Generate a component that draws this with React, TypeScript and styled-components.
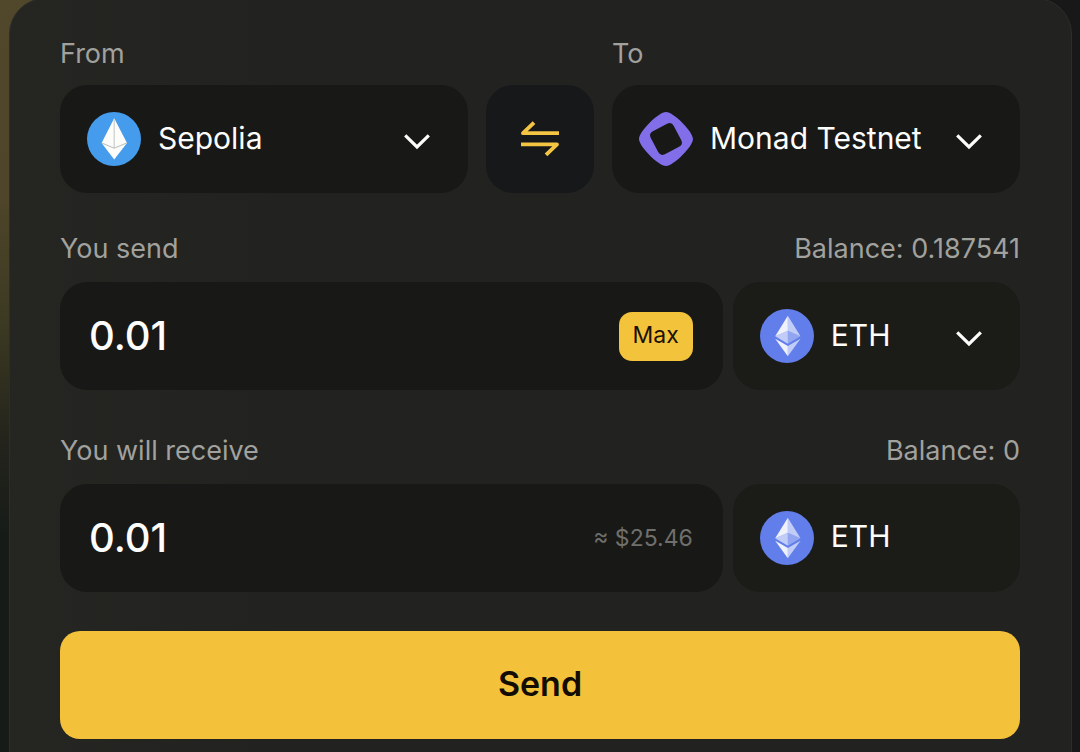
import React, { useState } from "react";
import styled, { createGlobalStyle } from "styled-components";

const GlobalStyle = createGlobalStyle`
  * { box-sizing: border-box; }
  html { background: #151715; }
  body {
    margin: 0;
    color: #fdfdfb;
    font-family: Inter, "Liberation Sans", sans-serif;
  }
  button, input, select { font: inherit; color: inherit; }
`;

const Page = styled.main`
  min-height: 100vh;
  padding: 0 8px 0 9px;
  overflow: hidden;
  display: flex;
  background:
    linear-gradient(90deg, transparent 50%, #171817 50%),
    linear-gradient(180deg, #51472b 0, #4e452a 200px, #3c3a22 320px, #24241c 440px, #161b18 540px, #171b18 100%);
`;

const Card = styled.form`
  flex: 1;
  min-width: 0;
  margin: -2px 0;
  padding: 36px 51px 12px 50px;
  border: 1px solid #2d2d2a;
  border-radius: 36px;
  border-bottom-left-radius: 0;
  border-bottom-right-radius: 0;
  background: linear-gradient(90deg, #252522 0, #222220 260px, #222220 100%);
`;

const Networks = styled.div`
  display: grid;
  grid-template-columns: 1fr 108px 1fr;
  gap: 0 18px;
  align-items: end;
`;

const Field = styled.div`
  min-width: 0;
  display: flex;
  flex-direction: column;
  gap: 12px;
`;

const Section = styled.section<{ $top: number }>`
  margin-top: ${(p) => p.$top}px;
  display: flex;
  flex-direction: column;
  gap: 14px;
`;

const Heading = styled.div`
  display: flex;
  justify-content: space-between;
`;

const Caption = styled.label`
  font-size: 27px;
  line-height: 38px;
  color: #a1a19e;
`;

const Balance = styled.span`
  font-size: 27px;
  line-height: 38px;
  color: #a1a19e;
`;

const Row = styled.div`
  display: grid;
  grid-template-columns: minmax(0, 30fr) minmax(0, 13fr);
  gap: 10px;
`;

const Picker = styled.div<{ $tone?: string }>`
  height: 108px;
  display: grid;
  grid-template-columns: 98px minmax(0, 1fr) 65px;
  align-items: center;
  border-radius: 27px;
  background: ${(p) => p.$tone ?? "#181816"};

  > svg {
    grid-row: 1;
    pointer-events: none;
    z-index: 1;
  }
  > svg:first-of-type {
    grid-column: 1;
    margin-left: 27px;
  }
  > svg:last-of-type:not(:first-of-type) { grid-column: 3; }
`;

const Select = styled.select`
  grid-row: 1;
  grid-column: 1 / -1;
  width: 100%;
  height: 108px;
  padding: 0 65px 3px 98px;
  border: 0;
  border-radius: 27px;
  appearance: none;
  background: transparent;
  font-size: 30px;
  cursor: pointer;

  option { background: #181816; }
`;

const TokenName = styled.span`
  grid-row: 1;
  grid-column: 2;
  padding-bottom: 4px;
  font-size: 30px;
`;

const SwapButton = styled.button`
  height: 108px;
  padding: 0;
  border: 0;
  border-radius: 27px;
  background: #16181a;
  display: grid;
  place-items: center;
  cursor: pointer;
`;

const AmountBox = styled.div`
  height: 108px;
  padding: 0 30px 0 29px;
  border-radius: 27px;
  background: #181816;
  display: flex;
  align-items: center;
  gap: 16px;
`;

const AmountInput = styled.input`
  flex: 1;
  min-width: 0;
  padding: 0 0 2px;
  border: 0;
  outline: 0;
  background: transparent;
  font-size: 40px;
  font-weight: 500;
`;

const MaxButton = styled.button`
  height: 49px;
  padding: 0 14px 2px;
  border: 0;
  border-radius: 13px;
  background: #f4c33c;
  color: #1b1207;
  font-size: 23px;
  cursor: pointer;
`;

const Fiat = styled.span`
  font-size: 23px;
  color: #6f6f6c;
`;

const SendButton = styled.button`
  width: 100%;
  height: 108px;
  margin-top: 39px;
  padding: 0 0 3px;
  border: 0;
  border-radius: 20px;
  background: #f3c13a;
  color: #120c04;
  font-size: 34px;
  font-weight: 600;
  cursor: pointer;
`;

const Chevron = () => (
  <svg width="28" height="28" viewBox="0 0 28 28" fill="none" stroke="#fdfdfb" strokeWidth="3.2" aria-hidden="true">
    <path d="M2.2 10.4 14 22 25.8 10.4" />
  </svg>
);

const SwapIcon = () => (
  <svg width="40" height="40" viewBox="0 0 40 40" fill="none" stroke="#f4c443" strokeWidth="3.8" strokeLinejoin="round" aria-hidden="true">
    <path d="M39 14.2H3L14 3.6" />
    <path d="M1 25.4H37L26 35.8" />
  </svg>
);

const SepoliaIcon = () => (
  <svg width="54" height="54" viewBox="0 0 54 54" aria-hidden="true">
    <circle cx="27" cy="27" r="27" fill="#459bec" />
    <path d="M27.2 6.3 14.6 31 27.2 47.5 40 31Z" fill="#fcfdfb" />
    <path d="M27.2 7.5V36" fill="none" stroke="#c9cdca" strokeWidth="1.2" />
    <path d="M14.8 31 27.2 36.2 39.8 31" fill="none" stroke="#bcc3c2" strokeWidth="1.2" />
  </svg>
);

const MonadIcon = () => (
  <svg width="54" height="54" viewBox="0 0 54 54" aria-hidden="true">
    <path
      fill="#836ee9"
      fillRule="evenodd"
      d="M27 0C19.5 0 0 19.5 0 27S19.5 54 27 54 54 34.5 54 27 34.5 0 27 0ZM11.8 25.9Q9.5 21.5 13.9 19.2L28.1 11.8Q32.5 9.5 34.8 13.9L42.2 28.1Q44.5 32.5 40.1 34.8L25.9 42.2Q21.5 44.5 19.2 40.1Z"
    />
  </svg>
);

const EthIcon = () => (
  <svg width="54" height="54" viewBox="0 0 32 32" aria-hidden="true">
    <circle cx="16" cy="16" r="16" fill="#627eea" />
    <g fill="#fff">
      <path fillOpacity=".602" d="M16.498 4v8.87l7.497 3.35z" />
      <path d="M16.498 4 9 16.22l7.498-3.35z" fillOpacity=".9" />
      <path fillOpacity=".602" d="M16.498 21.968v6.027L24 17.616z" />
      <path d="M16.498 27.995v-6.028L9 17.616z" fillOpacity=".9" />
      <path fillOpacity=".3" d="m16.498 20.573 7.497-4.353-7.497-3.348z" />
      <path fillOpacity=".602" d="m9 16.22 7.498 4.353v-7.701z" />
    </g>
  </svg>
);

const NETWORKS = ["Sepolia", "Monad Testnet"];

const networkIcon = (name: string) => (name === "Sepolia" ? <SepoliaIcon /> : <MonadIcon />);

export default function App() {
  const [from, setFrom] = useState("Sepolia");
  const [to, setTo] = useState("Monad Testnet");
  const [amount, setAmount] = useState("0.01");

  const swap = () => {
    setFrom(to);
    setTo(from);
  };

  return (
    <>
      <GlobalStyle />
      <Page>
        <Card onSubmit={(e: React.FormEvent) => e.preventDefault()}>
          <Networks>
            <Field>
              <Caption htmlFor="from">From</Caption>
              <Picker>
                {networkIcon(from)}
                <Select id="from" value={from} onChange={(e) => setFrom(e.target.value)}>
                  {NETWORKS.map((n) => (
                    <option key={n}>{n}</option>
                  ))}
                </Select>
                <Chevron />
              </Picker>
            </Field>
            <SwapButton type="button" aria-label="Swap networks" onClick={swap}>
              <SwapIcon />
            </SwapButton>
            <Field>
              <Caption htmlFor="to">To</Caption>
              <Picker>
                {networkIcon(to)}
                <Select id="to" value={to} onChange={(e) => setTo(e.target.value)}>
                  {NETWORKS.map((n) => (
                    <option key={n}>{n}</option>
                  ))}
                </Select>
                <Chevron />
              </Picker>
            </Field>
          </Networks>

          <Section $top={37}>
            <Heading>
              <Caption htmlFor="send">You send</Caption>
              <Balance>Balance: 0.187541</Balance>
            </Heading>
            <Row>
              <AmountBox>
                <AmountInput
                  id="send"
                  inputMode="decimal"
                  value={amount}
                  onChange={(e) => setAmount(e.target.value)}
                />
                <MaxButton type="button" onClick={() => setAmount("0.187541")}>
                  Max
                </MaxButton>
              </AmountBox>
              <Picker $tone="#1b1b17">
                <EthIcon />
                <Select aria-label="Token" defaultValue="ETH">
                  <option>ETH</option>
                </Select>
                <Chevron />
              </Picker>
            </Row>
          </Section>

          <Section $top={42}>
            <Heading>
              <Caption htmlFor="receive">You will receive</Caption>
              <Balance>Balance: 0</Balance>
            </Heading>
            <Row>
              <AmountBox>
                <AmountInput id="receive" readOnly value={amount} />
                <Fiat>≈ $25.46</Fiat>
              </AmountBox>
              <Picker $tone="#1b1b17">
                <EthIcon />
                <TokenName>ETH</TokenName>
              </Picker>
            </Row>
          </Section>

          <SendButton type="submit">Send</SendButton>
        </Card>
      </Page>
    </>
  );
}
